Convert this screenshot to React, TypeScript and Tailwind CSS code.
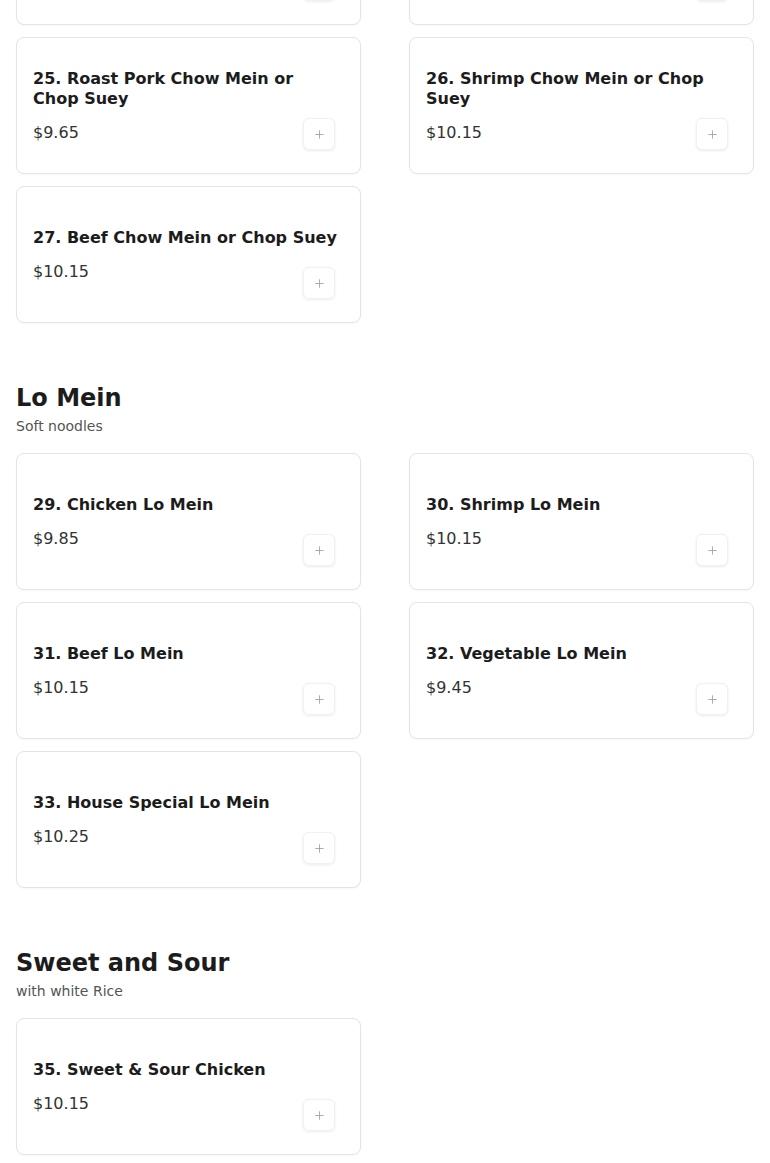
import React from "react";
import { Plus } from "lucide-react";

type Item = { name: string; price: string };

const sections: { title: string; note: string; items: Item[] }[] = [
  {
    title: "Lo Mein",
    note: "Soft noodles",
    items: [
      { name: "29. Chicken Lo Mein", price: "$9.85" },
      { name: "30. Shrimp Lo Mein", price: "$10.15" },
      { name: "31. Beef Lo Mein", price: "$10.15" },
      { name: "32. Vegetable Lo Mein", price: "$9.45" },
      { name: "33. House Special Lo Mein", price: "$10.25" },
    ],
  },
  {
    title: "Sweet and Sour",
    note: "with white Rice",
    items: [{ name: "35. Sweet & Sour Chicken", price: "$10.15" }],
  },
];

const chowMein: Item[] = [
  { name: "23. Chicken Chow Mein or Chop Suey", price: "$9.65" },
  { name: "24. Vegetable Chow Mein or Chop Suey", price: "$9.25" },
  { name: "25. Roast Pork Chow Mein or Chop Suey", price: "$9.65" },
  { name: "26. Shrimp Chow Mein or Chop Suey", price: "$10.15" },
  { name: "27. Beef Chow Mein or Chop Suey", price: "$10.15" },
];

function MenuCard({ item }: { item: Item }) {
  return (
    <div className="relative h-[137px] rounded-lg border border-[#e4e4e4] bg-white shadow-[0_1px_2px_rgba(0,0,0,0.03)]">
      <div className="flex h-full flex-col justify-center px-4 pt-[2px]">
        <h3 className="text-base font-bold leading-5 text-[#1c1c1c]">{item.name}</h3>
        <p className="mt-3 text-base leading-6 text-[#333333]">{item.price}</p>
      </div>
      <button className="absolute bottom-[23px] right-[25px] flex h-8 w-8 items-center justify-center rounded-md border border-[#f1f1f1] bg-white shadow-[0_1px_3px_rgba(0,0,0,0.08)]">
        <Plus size={13} strokeWidth={1.5} className="text-[#9a9a9a]" />
      </button>
    </div>
  );
}

export default function App() {
  return (
    <div className="min-h-screen overflow-hidden bg-white px-4 pb-10 font-['DejaVu_Sans',sans-serif]">
      <div className="-mt-[112px] grid grid-cols-2 gap-x-12 gap-y-3">
        {chowMein.map((item) => (
          <MenuCard key={item.name} item={item} />
        ))}
      </div>

      {sections.map((section) => (
        <section key={section.title} className="mt-[59px]">
          <h2 className="text-2xl font-bold leading-8 text-[#1c1c1c]">{section.title}</h2>
          <p className="mt-[2px] text-sm leading-5 text-[#555555]">{section.note}</p>
          <div className="mt-[17px] grid grid-cols-2 gap-x-12 gap-y-3">
            {section.items.map((item) => (
              <MenuCard key={item.name} item={item} />
            ))}
          </div>
        </section>
      ))}
    </div>
  );
}
